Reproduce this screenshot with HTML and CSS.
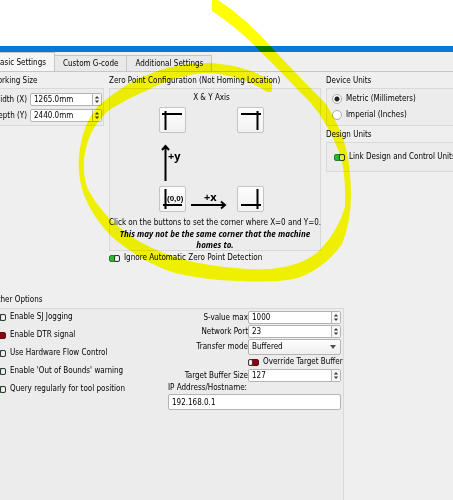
FILE: index.html
```
<!DOCTYPE html>
<html lang="en">
<head>
<meta charset="utf-8">
<title>Device Settings</title>
<link rel="stylesheet" href="styles.css">
</head>
<body>
<div class="window">
  <nav class="tabs">
    <button class="tab active" type="button">Basic Settings</button>
    <button class="tab" type="button">Custom G-code</button>
    <button class="tab" type="button">Additional Settings</button>
  </nav>
  <main class="pane">
    <div class="top">
      <section>
        <h2>Working Size</h2>
        <div class="box size">
          <label for="width">Width (X)</label>
          <span class="field"><input id="width" type="text" value="1265.0mm"><svg class="spin" viewBox="0 0 9 12"><path d="M2 5L4.500 2L7 5zM2 7L4.500 10L7 7z"/></svg></span>
          <label for="depth">Depth (Y)</label>
          <span class="field"><input id="depth" type="text" value="2440.0mm"><svg class="spin" viewBox="0 0 9 12"><path d="M2 5L4.500 2L7 5zM2 7L4.500 10L7 7z"/></svg></span>
        </div>
      </section>
      <section>
        <h2>Zero Point Configuration (Not Homing Location)</h2>
        <div class="box zero">
          <div class="corners">
            <p class="axis">X &amp; Y Axis</p>
            <button type="button" class="corner" aria-label="Top left"><svg viewBox="0 0 27 26"><path d="M3 7H23M6.500 4V23"/></svg></button>
            <span></span>
            <button type="button" class="corner" aria-label="Top right"><svg viewBox="0 0 27 26"><path d="M4 7H24M20.500 4V23"/></svg></button>
            <svg class="arrow" viewBox="0 0 27 53"><path d="M6.500 48V14M3 17L6.500 13L10 17"/><text x="9" y="27">+y</text></svg>
            <span></span><span></span>
            <button type="button" class="corner" aria-label="Bottom left"><svg viewBox="0 0 27 26"><path d="M4 19H23M6.500 3V23"/><text class="origin" x="8" y="15">(0,0)</text></svg></button>
            <svg class="arrow" viewBox="0 0 51 26"><path d="M5 19H38M35 15.500L39 19L35 22.500"/><text x="18" y="15">+x</text></svg>
            <button type="button" class="corner" aria-label="Bottom right"><svg viewBox="0 0 27 26"><path d="M4 19H24M20.500 3V23"/></svg></button>
          </div>
          <p class="note">Click on the buttons to set the corner where X=0 and Y=0.</p>
          <p class="note strong">This may not be the same corner that the machine<br>homes to.</p>
        </div>
        <label class="check ignore"><input class="toggle" type="checkbox" checked>Ignore Automatic Zero Point Detection</label>
      </section>
      <section>
        <h2>Device Units</h2>
        <div class="box units">
          <label class="radio"><input type="radio" name="unit" checked>Metric (Millimeters)</label>
          <label class="radio"><input type="radio" name="unit">Imperial (Inches)</label>
        </div>
        <h2 class="second">Design Units</h2>
        <div class="box link">
          <label class="check"><input class="toggle" type="checkbox" checked>Link Design and Control Units</label>
        </div>
      </section>
    </div>
    <section class="other">
      <h2>Other Options</h2>
      <div class="box options">
        <div class="flags">
          <label class="check"><input class="toggle" type="checkbox" checked>Enable SJ Jogging</label>
          <label class="check"><input class="toggle" type="checkbox">Enable DTR signal</label>
          <label class="check"><input class="toggle" type="checkbox" checked>Use Hardware Flow Control</label>
          <label class="check"><input class="toggle" type="checkbox" checked>Enable 'Out of Bounds' warning</label>
          <label class="check"><input class="toggle" type="checkbox" checked>Query regularly for tool position</label>
        </div>
        <div class="form">
          <label for="smax">S-value max</label>
          <span class="field"><input id="smax" type="text" value="1000"><svg class="spin" viewBox="0 0 9 12"><path d="M2 5L4.500 2L7 5zM2 7L4.500 10L7 7z"/></svg></span>
          <label for="port">Network Port</label>
          <span class="field"><input id="port" type="text" value="23"><svg class="spin" viewBox="0 0 9 12"><path d="M2 5L4.500 2L7 5zM2 7L4.500 10L7 7z"/></svg></span>
          <label for="mode">Transfer mode</label>
          <span class="field combo"><select id="mode"><option>Buffered</option></select><svg class="caret" viewBox="0 0 6 4"><path d="M0 0H6L3 4z"/></svg></span>
          <label class="check override"><input class="toggle" type="checkbox">Override Target Buffer</label>
          <label for="buffer">Target Buffer Size</label>
          <span class="field"><input id="buffer" type="text" value="127"><svg class="spin" viewBox="0 0 9 12"><path d="M2 5L4.500 2L7 5zM2 7L4.500 10L7 7z"/></svg></span>
          <label class="ip" for="ip">IP Address/Hostname:</label>
          <span class="field wide"><input id="ip" type="text" value="192.168.0.1"></span>
        </div>
      </div>
    </section>
  </main>
</div>
<svg class="marker" width="453" height="500" viewBox="0 0 453 500" aria-hidden="true">
  <path d="M212 0H218Q246 18 274 50Q300 78 326 104Q338 124 343 138Q351 163 351 195Q351 222 342 244Q325 268 298 278Q278 283 240 281Q204 280 175 273Q141 262 111 236Q92 216 84 195Q76 172 80 148Q84 122 98 106Q117 90 137 79Q170 64 200 63Q240 62 272 81V92H267Q240 74 205 73Q176 75 150 89Q124 100 108 111Q93 125 88 141Q80 165 87 187Q92 199 108 217Q129 238 152 248Q177 260 210 265Q240 270 270 269Q303 266 320 250Q338 231 345 207Q346 170 339 152Q328 123 310 102Q292 84 281 72L255 46Q235 26 212 11Z"/>
</svg>
</body>
</html>
```
FILE: styles.css
```
*, *::before { box-sizing: border-box; }
body {
  margin: 0;
  position: relative;
  overflow: hidden;
  background: #fff;
  color: #000;
  font: 8px/10px "DejaVu Sans Condensed", "Open Sans", sans-serif;
}
button, input, select { font: inherit; color: inherit; margin: 0; padding: 0; }
h2, p { margin: 0; font-size: 8px; font-weight: 400; white-space: nowrap; }
label { white-space: nowrap; }

.window {
  display: flex;
  flex-direction: column;
  min-height: calc(100vh - 46px);
  margin: 46px -20px 0 -24px;
  border-top: 6px solid #0a78d7;
  background: #efefef;
}
.tabs { display: flex; align-items: flex-end; height: 19px; }
.tab {
  height: 16px;
  padding: 1px 8px 0;
  border: 1px solid #c6c6c6;
  border-width: 1px 1px 0 0;
  background: #e9e9e9;
  white-space: nowrap;
}
.tab.active { height: 19px; width: 79px; text-align: right; background: #f6f6f6; }

.pane {
  flex: 1;
  display: flex;
  flex-direction: column;
  border-top: 1px solid #c6c6c6;
  padding-top: 4px;
}
.top { display: grid; grid-template-columns: 128px 212px 1fr; gap: 5px; }
.top h2 { padding-bottom: 2px; }
.top section:first-child h2 { padding-left: 15px; }
.box { border: 1px solid #d9d9d9; background: #ececec; }

.size {
  display: grid;
  grid-template-columns: 50px 72px;
  gap: 3px;
  padding: 4px 0 3px;
  align-items: center;
}
.size label, .form label { text-align: right; }
.field { display: flex; align-items: center; position: relative; height: 13px; }
.field input, .field select {
  width: 100%;
  height: 100%;
  padding: 0 3px;
  border: 1px solid #b4b4b4;
  border-radius: 2px;
  background: #fff;
}
.spin {
  position: absolute;
  right: 1px;
  top: 1px;
  width: 9px;
  height: 11px;
  border-left: 1px solid #b4b4b4;
  background: #f7f7f7;
  fill: #404040;
}

.zero { padding-top: 4px; }
.corners {
  display: grid;
  grid-template-columns: 27px 51px 27px;
  grid-template-rows: 14px 26px 53px 26px;
  margin: 0 0 5px 49px;
}
.axis { grid-column: 1 / -1; text-align: center; }
.corner {
  border: 1px solid #c4c4c4;
  border-radius: 2px;
  background: linear-gradient(#fdfdfd, #f2f2f2);
}
.corner svg { display: block; width: 27px; height: 26px; margin: -1px; }
.arrow { width: 100%; height: 100%; }
.corners path { fill: none; stroke: #000; stroke-width: 2; }
.corners text { font: 700 11px "Open Sans", sans-serif; }
.corners .origin { font: 700 8px "Liberation Sans Narrow", "Liberation Sans", sans-serif; }
.note { display: flex; justify-content: center; line-height: 11px; }
.strong {
  font-family: "Open Sans", sans-serif;
  font-weight: 700;
  font-style: italic;
  text-align: center;
}

.check, .radio { display: flex; align-items: center; gap: 4px; }
.ignore { padding-top: 2px; }
.toggle {
  appearance: none;
  flex: none;
  position: relative;
  width: 11px;
  height: 7px;
  border: 1px solid #5b1016;
  border-radius: 2px;
  background: #8a0610;
}
.toggle::before {
  content: "";
  position: absolute;
  left: -1px;
  top: -1px;
  width: 5px;
  height: 7px;
  border: 1px solid #4a3034;
  border-radius: 2px;
  background: #eee;
}
.toggle:checked { border-color: #2c7a35; background: #1fc02b; }
.toggle:checked::before { left: 4px; width: 6px; border-color: #333; }

.units { display: grid; gap: 2px; padding: 3px 5px; }
.radio { height: 14px; }
.radio input {
  appearance: none;
  width: 10px;
  height: 10px;
  border: 1px solid #aaa;
  border-radius: 50%;
  background: #fff;
}
.radio input:checked { background: radial-gradient(#222 0 2px, #fff 3px); }
.top .second { padding: 4px 0 2px; }
.link { height: 30px; padding: 9px 7px; }

.other { flex: 1; display: flex; flex-direction: column; width: 368px; margin-top: 32px; }
.other h2 { padding: 0 0 3px 16px; }
.options {
  flex: 1;
  display: flex;
  justify-content: space-between;
  align-items: flex-start;
  padding: 2px 2px 0 18px;
  border-bottom: 0;
}
.flags { display: grid; gap: 8px; padding-top: 1px; }
.form { display: grid; grid-template-columns: 80px 93px; gap: 1px 0; align-items: center; }
.form .override { grid-column: 2; height: 12px; }
.form .ip { grid-column: 1 / -1; text-align: left; }
.combo, .wide { height: 16px; }
.wide { grid-column: 1 / -1; }
.field select { appearance: none; background: linear-gradient(#fdfdfd, #efefef); }
.caret { position: absolute; right: 5px; width: 6px; height: 4px; fill: #505050; }

.marker {
  position: absolute;
  left: 0;
  top: 0;
  fill: #ff0;
  mix-blend-mode: multiply;
  pointer-events: none;
}
```
